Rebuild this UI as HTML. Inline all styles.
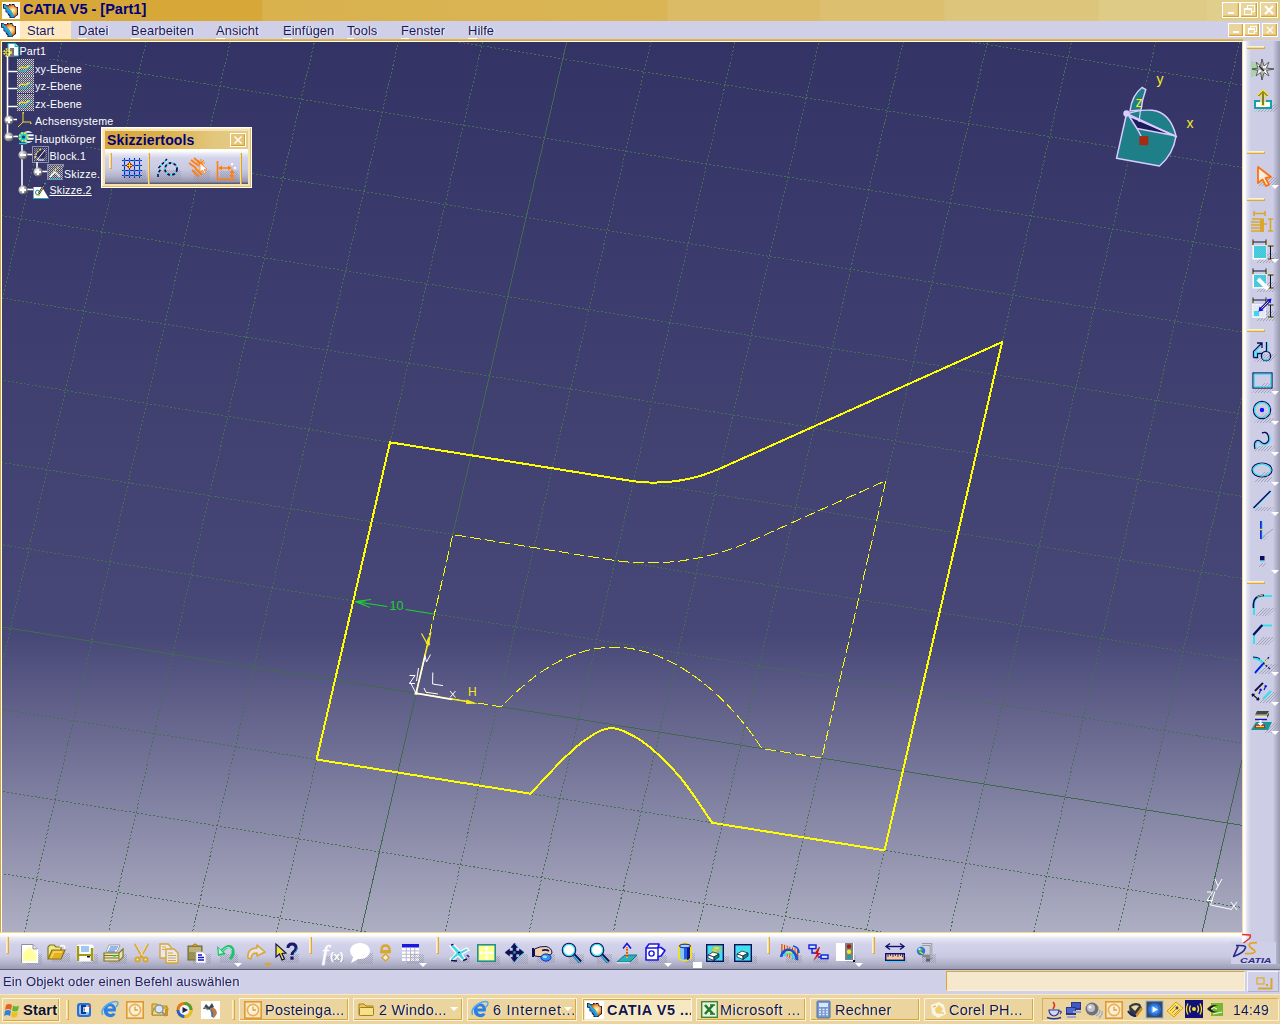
<!DOCTYPE html>
<html lang="de"><head><meta charset="utf-8"><title>CATIA V5 - [Part1]</title>
<style>
*{box-sizing:border-box}
html,body{margin:0;padding:0}
body{width:1280px;height:1024px;position:relative;overflow:hidden;background:#d0d0e8;font-family:"Liberation Sans",sans-serif;font-size:13px;color:#101050}
.abs{position:absolute}
#title{left:0;top:0;width:1280px;height:21px;background:linear-gradient(90deg,#d7a838 0,#d7a838 262px,#d9b24e 263px,#dab555 667px,#dcbb66 668px,#dcbb66 820px,#dcc070 821px,#dcc070 944px,#ddc57c 945px,#ddc57c 1098px,#decb86 1099px,#decb86 1206px,#e0ce8c 1207px,#e0ce8c 100%)}
#title .ticon{left:2px;top:2px;width:18px;height:17px;background:#fff}
#title .ttext{left:23px;top:0px;font-weight:bold;font-size:14.5px;line-height:18px;color:#00007c;white-space:nowrap}
.wbtn{position:absolute;background:#ead49a;border:1px solid #fff;box-shadow:inset -1px -1px 0 #d9a432,inset -2px -2px 0 #e6c67a}
.wbtn svg{position:absolute;left:0;top:0}
#menu{left:0;top:21px;width:1280px;height:18px;background:#cfcfe7}
#menu .micon{left:0;top:0;width:20px;height:18px;background:#fff}
#menu .mstart{left:20px;top:0;width:51px;height:18px;background:#ffe8c0}
.mi{position:absolute;top:2px;font-size:13px;line-height:16px;color:#18185c;white-space:nowrap;text-shadow:1px 0 0 #fff}
.mi u{text-decoration:none;border-bottom:1px solid #fff}
#goldline{left:0;top:39px;width:1280px;height:1px;background:#ecd08c}
#goldline2{left:0;top:39px;width:1243px;height:2px;background:linear-gradient(180deg,#e6b955,#d9a228)}
#whiteline{left:1px;top:41px;width:1241px;height:1px;background:#fff}
#leftgold{left:0;top:41px;width:1px;height:892px;background:#d9a228}
#leftwhite{left:1px;top:41px;width:1px;height:892px;background:#fff}
#viewport{left:2px;top:42px;width:1240px;height:890px;overflow:hidden;background:linear-gradient(180deg,#333366 0,#484878 594px,#aeaec3 100%)}
#viewport svg{position:absolute;left:0;top:0}
.tt{position:absolute;color:#fff;font-size:10.67px;letter-spacing:0.25px;line-height:12px;white-space:nowrap;background:#363667;padding:1px 2px 2px 1px;margin:-1px 0 0 -1px}
#rtb{left:1242px;top:41px;width:38px;height:923px;z-index:2;background:linear-gradient(90deg,#fff 0,#fff 3px,#e4e4f2 5px,#cdcde5 9px,#cdcde5 31px,#b4b4cc 34px,#9898b0 38px)}
#rgold{left:1242px;top:41px;width:1px;height:892px;background:#f0dca0;z-index:3}
#btb{left:0;top:932px;width:1280px;height:38px;background:linear-gradient(180deg,#f0d890 0,#f0d890 1px,#fff 1px,#fff 3px,#e8e8f5 6px,#d2d2ea 12px,#cacae2 24px,#b0b0c8 32px,#9a9ab2 37px,#5e5e74 37px,#5e5e74 38px)}
#status{left:0;top:970px;width:1280px;height:24px;background:#d0d0e8}
#status .stext{left:3px;top:4px;font-size:13px;line-height:16px;color:#20205c;white-space:nowrap;text-shadow:1px 0 0 #f4f4ff;letter-spacing:0.14px}
#taskbar{left:0;top:994px;width:1280px;height:30px;background:#ebd49d;border-top:1px solid #f6e8c4}
.tbtn{position:absolute;top:4px;height:23px;border:1px solid #fcf4de;box-shadow:inset -1px -1px 0 #d9a838;font-size:14.5px;letter-spacing:0.25px;line-height:20px;color:#141440;white-space:nowrap;overflow:hidden;text-shadow:1px 0 0 #fff}
.tbtn span{position:absolute;top:1px}
.hbar{position:absolute;width:18px;height:3px;border-top:1px solid #fbf0d0;border-bottom:1px solid #dca93a;border-right:1px solid #dca93a;background:#f2dca0}
.vbar{position:absolute;width:3px;border-left:1px solid #fbf0d0;border-right:1px solid #dca93a;border-bottom:1px solid #dca93a;background:#f2dca0}
.ic{position:absolute;width:24px;height:24px}
.ic svg{position:absolute;left:0;top:0;overflow:visible}
</style></head>
<body>
<div id="title" class="abs">
  <div class="ticon abs"><svg class="abs" style="left:1px;top:2px" width="16" height="15" viewBox="0 0 16 15"><defs><radialGradient id="cg12" cx="0.6" cy="0.45" r="0.55"><stop offset="0" stop-color="#fff8e0"/><stop offset="0.5" stop-color="#f8b850"/><stop offset="1" stop-color="#c05010"/></radialGradient></defs>
<path d="M0,0 L2,0 L3.5,1 L6,1 L6,0 L7.5,0 L8,1 L9,0 L11.5,0 L11.5,1.5 L12.5,2 L12.5,3 L15,3 L15,11 L14,11.5 L12,13 L11.5,14 L6.5,14 L6.5,12 L5,11 L4.5,9 L2.5,8 L2.5,5 L0,4.5 Z" fill="#1a0a30"/>
<path d="M3,1.5 L11,1 L11.5,3 L14.3,3.8 L14.2,10.5 L11,13 L10,11 Z" fill="url(#cg12)"/>
<path d="M0.6,0.6 L2,0.6 L8.5,7 L11,12 L10.8,13.5 L7.5,13.5 L7.2,11.5 L5.2,9.5 L3.2,7.5 L3,4.5 L0.8,4 Z" fill="#2090d8"/>
<path d="M1.5,1.5 L8,8 L10.3,12.5" stroke="#30b8c8" stroke-width="1.2" fill="none"/>
</svg></div>
  <div class="ttext abs">CATIA V5 - [Part1]</div>
  <div class="wbtn" style="left:1222px;top:2px;width:18px;height:16px"><svg width="16" height="14" viewBox="0 0 16 14"><rect x="5" y="9" width="6" height="2" fill="#fff"/></svg></div><div class="wbtn" style="left:1240px;top:2px;width:18px;height:16px"><svg width="16" height="14" viewBox="0 0 16 14"><rect x="6.5" y="2.5" width="7" height="6" fill="none" stroke="#fff" stroke-width="1"/><rect x="3.5" y="5.5" width="7" height="6" fill="#ead49a" stroke="#fff" stroke-width="1"/><rect x="3" y="5" width="8" height="2" fill="#fff"/></svg></div><div class="wbtn" style="left:1260px;top:2px;width:18px;height:16px"><svg width="16" height="14" viewBox="0 0 16 14"><path d="M4,3 L12,11 M12,3 L4,11" stroke="#fff" stroke-width="2" fill="none"/></svg></div>
</div>
<div id="menu" class="abs">
  <div class="micon abs"><svg class="abs" style="left:1px;top:2px" width="16" height="15" viewBox="0 0 16 15"><defs><radialGradient id="cg12" cx="0.6" cy="0.45" r="0.55"><stop offset="0" stop-color="#fff8e0"/><stop offset="0.5" stop-color="#f8b850"/><stop offset="1" stop-color="#c05010"/></radialGradient></defs>
<path d="M0,0 L2,0 L3.5,1 L6,1 L6,0 L7.5,0 L8,1 L9,0 L11.5,0 L11.5,1.5 L12.5,2 L12.5,3 L15,3 L15,11 L14,11.5 L12,13 L11.5,14 L6.5,14 L6.5,12 L5,11 L4.5,9 L2.5,8 L2.5,5 L0,4.5 Z" fill="#1a0a30"/>
<path d="M3,1.5 L11,1 L11.5,3 L14.3,3.8 L14.2,10.5 L11,13 L10,11 Z" fill="url(#cg12)"/>
<path d="M0.6,0.6 L2,0.6 L8.5,7 L11,12 L10.8,13.5 L7.5,13.5 L7.2,11.5 L5.2,9.5 L3.2,7.5 L3,4.5 L0.8,4 Z" fill="#2090d8"/>
<path d="M1.5,1.5 L8,8 L10.3,12.5" stroke="#30b8c8" stroke-width="1.2" fill="none"/>
</svg></div>
  <div class="mstart abs"></div>
  <div class="mi" style="left:27px"><u>S</u>tart</div><div class="mi" style="left:78px"><u>D</u>atei</div><div class="mi" style="left:131px"><u>B</u>earbeiten</div><div class="mi" style="left:216px"><u>A</u>nsicht</div><div class="mi" style="left:283px"><u>E</u>infügen</div><div class="mi" style="left:347px"><u>T</u>ools</div><div class="mi" style="left:401px"><u>F</u>enster</div><div class="mi" style="left:468px"><u>H</u>ilfe</div>
  <div class="wbtn" style="left:1228px;top:2px;width:16px;height:14px"><svg width="14" height="12" viewBox="0 0 14 12"><rect x="4" y="7" width="6" height="2" fill="#fff"/></svg></div><div class="wbtn" style="left:1244px;top:2px;width:16px;height:14px"><svg width="14" height="12" viewBox="0 0 14 12"><rect x="5.5" y="2.5" width="6" height="5" fill="none" stroke="#fff" stroke-width="1"/><rect x="3.5" y="4.5" width="6" height="5" fill="#ead49a" stroke="#fff" stroke-width="1"/><rect x="3" y="4" width="7" height="2" fill="#fff"/></svg></div><div class="wbtn" style="left:1262px;top:2px;width:16px;height:14px"><svg width="14" height="12" viewBox="0 0 14 12"><path d="M4,3 L10,9 M10,3 L4,9" stroke="#fff" stroke-width="1.2" fill="none"/></svg></div>
</div>
<div id="goldline" class="abs"></div><div id="goldline2" class="abs"></div>
<div id="leftgold" class="abs"></div><div id="leftwhite" class="abs"></div><div id="whiteline" class="abs"></div>
<div id="viewport" class="abs">
<svg width="1240" height="890" viewBox="0 0 1240 890">
<g shape-rendering="crispEdges" fill="none" stroke-width="1">
<line x1="-326.6" y1="943.9" x2="-33.2" y2="-324.9" stroke="#446f50" stroke-dasharray="2 2"/>
<line x1="-245.5" y1="956.8" x2="47.9" y2="-312.0" stroke="#446f50" stroke-dasharray="2 2"/>
<line x1="-164.4" y1="969.8" x2="129.1" y2="-299.0" stroke="#446f50" stroke-dasharray="2 2"/>
<line x1="-83.2" y1="982.8" x2="210.2" y2="-286.0" stroke="#446f50" stroke-dasharray="2 2"/>
<line x1="-2.1" y1="995.8" x2="291.3" y2="-273.0" stroke="#446f50" stroke-dasharray="2 2"/>
<line x1="79.0" y1="1008.8" x2="372.5" y2="-260.0" stroke="#446f50" stroke-dasharray="2 2"/>
<line x1="160.1" y1="1021.7" x2="453.6" y2="-247.1" stroke="#446f50" stroke-dasharray="2 2"/>
<line x1="241.3" y1="1034.7" x2="534.7" y2="-234.1" stroke="#446f50" stroke-dasharray="2 2"/>
<line x1="322.4" y1="1047.7" x2="615.8" y2="-221.1" stroke="#3f6a50"/>
<line x1="403.5" y1="1060.7" x2="697.0" y2="-208.1" stroke="#446f50" stroke-dasharray="2 2"/>
<line x1="484.7" y1="1073.7" x2="778.1" y2="-195.1" stroke="#446f50" stroke-dasharray="2 2"/>
<line x1="565.8" y1="1086.6" x2="859.2" y2="-182.2" stroke="#446f50" stroke-dasharray="2 2"/>
<line x1="646.9" y1="1099.6" x2="940.4" y2="-169.2" stroke="#446f50" stroke-dasharray="2 2"/>
<line x1="728.0" y1="1112.6" x2="1021.5" y2="-156.2" stroke="#446f50" stroke-dasharray="2 2"/>
<line x1="809.2" y1="1125.6" x2="1102.6" y2="-143.2" stroke="#446f50" stroke-dasharray="2 2"/>
<line x1="890.3" y1="1138.6" x2="1183.8" y2="-130.2" stroke="#446f50" stroke-dasharray="2 2"/>
<line x1="971.4" y1="1151.5" x2="1264.9" y2="-117.3" stroke="#446f50" stroke-dasharray="2 2"/>
<line x1="1052.6" y1="1164.5" x2="1346.0" y2="-104.3" stroke="#446f50" stroke-dasharray="2 2"/>
<line x1="1133.7" y1="1177.5" x2="1427.1" y2="-91.3" stroke="#3f6a50"/>
<line x1="1214.8" y1="1190.5" x2="1508.3" y2="-78.3" stroke="#446f50" stroke-dasharray="2 2"/>
<line x1="1296.0" y1="1203.5" x2="1589.4" y2="-65.3" stroke="#446f50" stroke-dasharray="2 2"/>
<line x1="-326.6" y1="943.9" x2="1377.1" y2="1216.4" stroke="#446f50" stroke-dasharray="2 2"/>
<line x1="-308.3" y1="864.6" x2="1395.4" y2="1137.1" stroke="#446f50" stroke-dasharray="2 2"/>
<line x1="-290.0" y1="785.3" x2="1413.8" y2="1057.8" stroke="#446f50" stroke-dasharray="2 2"/>
<line x1="-271.6" y1="706.0" x2="1432.1" y2="978.5" stroke="#446f50" stroke-dasharray="2 2"/>
<line x1="-253.3" y1="626.7" x2="1450.5" y2="899.2" stroke="#446f50" stroke-dasharray="2 2"/>
<line x1="-234.9" y1="547.4" x2="1468.8" y2="819.9" stroke="#3f6a50"/>
<line x1="-216.6" y1="468.1" x2="1487.1" y2="740.6" stroke="#446f50" stroke-dasharray="2 2"/>
<line x1="-198.3" y1="388.8" x2="1505.5" y2="661.3" stroke="#446f50" stroke-dasharray="2 2"/>
<line x1="-179.9" y1="309.5" x2="1523.8" y2="582.0" stroke="#446f50" stroke-dasharray="2 2"/>
<line x1="-161.6" y1="230.2" x2="1542.1" y2="502.7" stroke="#446f50" stroke-dasharray="2 2"/>
<line x1="-143.2" y1="150.9" x2="1560.5" y2="423.4" stroke="#446f50" stroke-dasharray="2 2"/>
<line x1="-124.9" y1="71.6" x2="1578.8" y2="344.1" stroke="#446f50" stroke-dasharray="2 2"/>
<line x1="-106.6" y1="-7.7" x2="1597.2" y2="264.8" stroke="#446f50" stroke-dasharray="2 2"/>
<line x1="-88.2" y1="-87.0" x2="1615.5" y2="185.5" stroke="#446f50" stroke-dasharray="2 2"/>
<line x1="-69.9" y1="-166.3" x2="1633.8" y2="106.2" stroke="#446f50" stroke-dasharray="2 2"/>
<line x1="-51.5" y1="-245.6" x2="1652.2" y2="26.9" stroke="#3f6a50"/>
</g>
<path d="M314.6,717.5 L388.0,400.3 L627.3,438.6 L627.3,438.6 L631.3,439.2 L635.2,439.7 L639.2,440.0 L643.2,440.3 L647.3,440.5 L651.3,440.6 L655.3,440.5 L659.4,440.4 L663.4,440.2 L667.4,439.8 L671.5,439.4 L675.5,438.8 L679.5,438.2 L683.5,437.4 L687.5,436.6 L691.5,435.6 L695.4,434.6 L699.4,433.5 L703.3,432.2 L707.1,430.9 L711.0,429.4 L714.8,427.9 L718.6,426.3 L1000.1,300.1 L882.5,808.4 L710.2,780.8 L708.0,777.5 L705.0,773.1 L701.5,767.8 L697.6,762.0 L693.4,755.9 L689.3,750.0 L685.2,744.4 L681.5,739.5 L678.0,735.2 L674.4,731.1 L670.9,727.2 L667.4,723.5 L663.9,719.9 L660.5,716.5 L657.2,713.4 L653.9,710.4 L650.7,707.6 L647.6,705.0 L644.6,702.6 L641.6,700.4 L638.6,698.3 L635.7,696.4 L632.8,694.7 L629.9,693.1 L627.0,691.7 L624.2,690.3 L621.4,689.0 L618.6,688.0 L615.9,687.1 L613.1,686.5 L610.4,686.2 L607.6,686.3 L604.8,686.7 L602.0,687.4 L599.2,688.4 L596.5,689.7 L593.7,691.2 L590.9,692.9 L588.0,694.7 L585.2,696.6 L582.3,698.6 L579.5,700.7 L576.6,703.0 L573.8,705.4 L570.8,708.0 L567.8,710.9 L564.5,713.9 L561.1,717.2 L557.2,721.1 L552.8,725.7 L548.0,730.7 L543.3,735.8 L538.7,740.7 L534.5,745.2 L531.0,749.0 L528.4,751.7 L314.6,717.5 Z" fill="none" stroke="#ffff00" stroke-width="2" stroke-linejoin="miter" shape-rendering="crispEdges"/>
<path d="M414.1,651.2 L450.8,492.6 L609.0,517.9 L609.0,517.9 L615.1,518.8 L621.2,519.5 L627.3,520.1 L633.5,520.5 L639.7,520.8 L645.9,520.9 L652.1,520.9 L658.3,520.7 L664.6,520.3 L670.8,519.8 L677.0,519.1 L683.2,518.2 L689.4,517.3 L695.6,516.1 L701.7,514.8 L707.8,513.3 L713.9,511.7 L720.0,510.0 L726.0,508.1 L731.9,506.0 L737.9,503.8 L743.7,501.4 L749.5,498.9 L883.9,438.6 L819.8,716.1 L759.9,706.5 L754.7,698.8 L749.5,691.5 L744.2,684.5 L738.8,677.9 L733.3,671.5 L727.8,665.4 L722.2,659.7 L716.6,654.2 L710.8,648.9 L705.0,644.0 L699.2,639.3 L693.3,634.9 L687.3,630.8 L681.3,626.9 L675.2,623.3 L669.0,620.0 L662.8,617.0 L656.5,614.3 L650.1,611.9 L643.6,609.9 L637.1,608.2 L630.5,606.8 L623.8,605.9 L617.0,605.3 L610.1,605.2 L603.1,605.5 L596.0,606.3 L588.7,607.6 L581.4,609.5 L573.9,611.9 L566.3,614.9 L558.5,618.5 L550.6,622.8 L542.5,627.8 L534.2,633.5 L525.8,640.1 L517.2,647.4 L508.3,655.7 L499.3,664.8 L414.1,651.2 Z" fill="none" stroke="#fafa10" stroke-width="1" stroke-dasharray="11 4" shape-rendering="crispEdges"/>
<path d="M354.0,559.8 L385.0,564.5" fill="none" stroke="#1fd034" stroke-width="1"/>
<path d="M404.0,567.5 L432.5,572.2" fill="none" stroke="#1fd034" stroke-width="1"/>
<path d="M369.0,557.5 L353.5,559.5 L368.0,565.5" fill="none" stroke="#1fd034" stroke-width="1"/>
<path d="M364.0,558.8 L354.0,559.7 L363.0,563.5" fill="none" stroke="#1fd034" stroke-width="1"/>
<text x="387.5" y="567.5" fill="#1fd034" font-family="Liberation Sans, sans-serif" font-size="12.5">10</text>
<path d="M414.1,651.2 L426.8,597.0" fill="none" stroke="#f4e820" stroke-width="1.6"/>
<path d="M414.1,651.2 L468.0,660.0" fill="none" stroke="#f4e820" stroke-width="1.6"/>
<path d="M419.5,591.5 L426.0,603.0 L429.0,590.0" fill="none" stroke="#f4e820" stroke-width="1.2"/>
<path d="M426.6,594 L423.8,601.5 L428.2,603.5 Z" fill="#f4e820"/>
<path d="M476,661.8 L464.5,657.5 L464,662 Z" fill="#f4e820"/>
<text x="466" y="654" fill="#f4e820" font-family="Liberation Sans, sans-serif" font-size="12">H</text>
<path d="M414.1,651.2 L423.0,614.0" fill="none" stroke="#fff" stroke-width="1.4"/>
<path d="M414.1,651.2 L450.0,657.5" fill="none" stroke="#fff" stroke-width="1.4"/>
<path d="M430.8,630.5 L430.6,642.0 L441.0,643.6" fill="none" stroke="#fff" stroke-width="1"/>
<path d="M422.0,646.0 L424.0,650.3 L436.0,652.0" fill="none" stroke="#fff" stroke-width="1"/>
<path d="M414.0,651.0 L408.0,640.0" fill="none" stroke="#fff" stroke-width="1"/>
<path d="M407.5,633.5 L413.0,633.5 L407.5,641.5 L413.0,641.5" fill="none" stroke="#fff" stroke-width="1"/>
<path d="M416.5,626.0 L414.5,639.0" fill="none" stroke="#fff" stroke-width="1"/>
<path d="M422.5,612.5 L424.5,620.0 L428.5,612.5" fill="none" stroke="#fff" stroke-width="1"/>
<path d="M448.0,649.0 L453.5,655.5" fill="none" stroke="#fff" stroke-width="1"/>
<path d="M453.5,649.0 L448.0,655.5" fill="none" stroke="#fff" stroke-width="1"/>
<rect x="412.6" y="649.7" width="3" height="3" fill="#fff"/>
<path d="M1212.8,849.5 L1208.5,863.0 L1229.0,867.3" fill="none" stroke="#fff" stroke-width="1"/>
<path d="M1205.0,850.0 L1210.5,850.0 L1205.0,858.5 L1210.5,858.5" fill="none" stroke="#fff" stroke-width="1"/>
<path d="M1213.0,837.0 L1216.0,844.0 L1220.0,837.0" fill="none" stroke="#fff" stroke-width="1"/>
<path d="M1216.0,844.0 L1214.0,848.0" fill="none" stroke="#fff" stroke-width="1"/>
<path d="M1229.0,860.0 L1235.0,868.0" fill="none" stroke="#fff" stroke-width="1"/>
<path d="M1235.0,860.0 L1229.0,868.0" fill="none" stroke="#fff" stroke-width="1"/>
<path d="M1128,69 Q1130.0,53.0 1140,45.5 L1143.8,47.5 Q1140.0,58.0 1139,68 Z" fill="#1f7f88" stroke="#dccbff" stroke-width="1.5"/>
<path d="M1124.5,72 L1114.5,116.30000000000001 L1157.5,124 Q1171.5,112.0 1174,94 Q1168.0,70.0 1150,68.3 Q1138.0,67.3 1124.5,72 Z" fill="#1f7f88" stroke="#dccbff" stroke-width="1.5" stroke-linejoin="round"/>
<path d="M1127.0,74.0 L1172.0,93.5 L1135.0,86.5 Z" fill="#1b1b5a" stroke="#dccbff" stroke-width="1.5" stroke-linejoin="round"/>
<path d="M1124.5,71.5 L1175.0,95.0" fill="none" stroke="#dccbff" stroke-width="1.5"/>
<path d="M1135.0,86.5 L1139.0,94.0" fill="none" stroke="#dccbff" stroke-width="1.5"/>
<path d="M1138.5,68.0 L1137.0,80.0" fill="none" stroke="#dccbff" stroke-width="1.2"/>
<circle cx="1124.5" cy="71.5" r="3.2" fill="#dccbff"/>
<rect x="1137.3" y="94.2" width="9" height="9" fill="#a42a10"/>
<text x="1154.5" y="41.5" fill="#f8ec20" font-family="Liberation Sans, sans-serif" font-size="14">y</text>
<text x="1133.5" y="64.5" fill="#f8ec20" font-family="Liberation Sans, sans-serif" font-size="14">z</text>
<text x="1184.5" y="86" fill="#f8ec20" font-family="Liberation Sans, sans-serif" font-size="14">x</text>
</svg>
<svg width="0" height="0" style="position:absolute"><defs>
<pattern id="hid" width="2" height="2" patternUnits="userSpaceOnUse"><rect width="2" height="2" fill="#4a4a70"/><rect width="1" height="1" fill="#d8d8d0"/><rect x="1" y="1" width="1" height="1" fill="#a8a8b0"/></pattern>
<pattern id="shd" width="2" height="2" patternUnits="userSpaceOnUse"><rect width="1" height="1" fill="#8c8ca0"/><rect x="1" y="1" width="1" height="1" fill="#8c8ca0"/></pattern>
<pattern id="hat" width="3" height="3" patternUnits="userSpaceOnUse"><path d="M-0.5,3.5 L3.5,-0.5 M-0.5,0.5 L0.5,-0.5 M2.5,3.5 L3.5,2.5" stroke="#9a9aae" stroke-width="0.9"/></pattern>
<radialGradient id="ball" cx="0.35" cy="0.35" r="0.7"><stop offset="0" stop-color="#f4f4f4"/><stop offset="0.6" stop-color="#a0a0a0"/><stop offset="1" stop-color="#585860"/></radialGradient>
</defs></svg><svg class="abs" style="left:-2px;top:-42px" width="130" height="200" viewBox="0 0 130 200"><path d="M7.5,56 V136 M8,71.5 H17 M8,88.5 H17 M8,106.5 H17 M8,119.5 H17 M8,136.5 H18 M22,145 V189 M22,154.5 H32 M22,189.5 H33 M37,162 V171 M37,171.5 H47" stroke="#fff" stroke-width="1.6" fill="none"/></svg><svg class="abs" style="left:1px;top:1px;overflow:visible" width="16" height="16" viewBox="0 0 16 16" ><path d="M5,0.5 H12 L15.5,3.5 V13 H5 Z" fill="#fff" stroke="#20b0b8" stroke-width="1"/><path d="M12,0.5 V3.5 H15.5" fill="#a0f0f0" stroke="#20b0b8" stroke-width="1"/><rect x="7" y="5" width="4" height="9" fill="#707078"/><circle cx="4.5" cy="9.5" r="3.2" fill="none" stroke="#f0e050" stroke-width="2.4" stroke-dasharray="1.6 1"/><circle cx="4.5" cy="9.5" r="2" fill="#f0e050"/><circle cx="4.5" cy="9.5" r="1" fill="#404048"/></svg><div class="tt" style="left:17.5px;top:3px">Part1</div><svg class="abs" style="left:15px;top:17px;overflow:visible" width="17" height="17" viewBox="0 0 17 17" ><rect width="17" height="17" fill="url(#hid)"/><path d="M2,10 L5,8 L8,9 L11,7 L14,8" stroke="#f0e040" stroke-width="1.5" fill="none"/><path d="M2,12 L8,12 L14,7" stroke="#30b0c0" stroke-width="1.5" fill="none"/></svg><div class="tt" style="left:33px;top:21px">xy-Ebene</div><svg class="abs" style="left:15px;top:34px;overflow:visible" width="17" height="17" viewBox="0 0 17 17" ><rect width="17" height="17" fill="url(#hid)"/><path d="M2,10 L5,8 L8,9 L11,7 L14,8" stroke="#f0e040" stroke-width="1.5" fill="none"/><path d="M2,12 L8,12 L14,7" stroke="#30b0c0" stroke-width="1.5" fill="none"/></svg><div class="tt" style="left:33px;top:38px">yz-Ebene</div><svg class="abs" style="left:15px;top:51.5px;overflow:visible" width="17" height="17" viewBox="0 0 17 17" ><rect width="17" height="17" fill="url(#hid)"/><path d="M2,10 L5,8 L8,9 L11,7 L14,8" stroke="#f0e040" stroke-width="1.5" fill="none"/><path d="M2,12 L8,12 L14,7" stroke="#30b0c0" stroke-width="1.5" fill="none"/></svg><div class="tt" style="left:33px;top:55.5px">zx-Ebene</div><svg class="abs" style="left:1.5px;top:72.5px;overflow:visible" width="10" height="10" viewBox="0 0 10 10" ><circle cx="5" cy="5" r="4.6" fill="url(#ball)"/><rect x="2" y="4" width="6" height="2" fill="#fff"/><rect x="4" y="2" width="2" height="6" fill="#fff"/></svg><svg class="abs" style="left:1.5px;top:89.5px;overflow:visible" width="10" height="10" viewBox="0 0 10 10" ><circle cx="5" cy="5" r="4.6" fill="url(#ball)"/><rect x="2" y="4" width="6" height="2" fill="#fff"/></svg><svg class="abs" style="left:15.5px;top:107.5px;overflow:visible" width="10" height="10" viewBox="0 0 10 10" ><circle cx="5" cy="5" r="4.6" fill="url(#ball)"/><rect x="2" y="4" width="6" height="2" fill="#fff"/></svg><svg class="abs" style="left:30.5px;top:124.5px;overflow:visible" width="10" height="10" viewBox="0 0 10 10" ><circle cx="5" cy="5" r="4.6" fill="url(#ball)"/><rect x="2" y="4" width="6" height="2" fill="#fff"/><rect x="4" y="2" width="2" height="6" fill="#fff"/></svg><svg class="abs" style="left:15.5px;top:142.5px;overflow:visible" width="10" height="10" viewBox="0 0 10 10" ><circle cx="5" cy="5" r="4.6" fill="url(#ball)"/><rect x="2" y="4" width="6" height="2" fill="#fff"/><rect x="4" y="2" width="2" height="6" fill="#fff"/></svg><svg class="abs" style="left:15px;top:70px;overflow:visible" width="16" height="16" viewBox="0 0 16 16" ><path d="M6,1 V10 L1,15 M6,10 H14" stroke="#f0d838" stroke-width="1" fill="none"/><rect x="5.5" y="0" width="1.5" height="1.5" fill="#f0d838"/><rect x="13" y="10.5" width="1.5" height="1.5" fill="#f0d838"/></svg><div class="tt" style="left:33px;top:73px">Achsensysteme</div><svg class="abs" style="left:16px;top:87px;overflow:visible" width="16" height="16" viewBox="0 0 16 16" ><circle cx="10" cy="8" r="6" fill="#fff"/><path d="M8,4.5 H15 M7,8 H16 M8,11.5 H15" stroke="#283068" stroke-width="1.4"/><circle cx="5.5" cy="8" r="5" fill="#20c8d8"/><circle cx="5.5" cy="8" r="4" fill="none" stroke="#f0e838" stroke-width="2" stroke-dasharray="1.6 1.6"/><circle cx="5.5" cy="8" r="1.6" fill="#283068"/><path d="M1,14.5 H9" stroke="#20c8d8" stroke-width="1.4"/></svg><div class="tt" style="left:32.5px;top:90.5px">Hauptkörper</div><svg class="abs" style="left:30px;top:104px;overflow:visible" width="17" height="17" viewBox="0 0 17 17" ><rect x="0.5" y="0.5" width="16" height="16" fill="none" stroke="#e8e8e8" stroke-width="1" stroke-dasharray="1 1"/><rect x="2" y="2" width="13" height="13" fill="url(#hid)" opacity="0.55"/><circle cx="9" cy="8" r="4.5" fill="#2a2a5c"/><path d="M3,12 Q4,5 10,3" stroke="#f0e040" stroke-width="1.4" fill="none" stroke-dasharray="2 1"/><path d="M5,14 L13,4 M6,14 H12" stroke="#fff" stroke-width="1" fill="none"/></svg><div class="tt" style="left:47.5px;top:108px">Block.1</div><svg class="abs" style="left:45px;top:122px;overflow:visible" width="17" height="16" viewBox="0 0 17 16" ><rect x="0.5" y="0.5" width="16" height="15" fill="none" stroke="#e8e8e8" stroke-width="1" stroke-dasharray="1 1"/><rect x="1" y="1" width="15" height="14" fill="url(#hid)" opacity="0.9"/><path d="M4,11 L8,6 L12,3" stroke="#f0e040" stroke-width="1.2" fill="none" stroke-dasharray="2 1"/><path d="M3,13 L8,8 L13,13" stroke="#fff" stroke-width="1.4" fill="none"/><path d="M3,15 H13" stroke="#20b0c0" stroke-width="1"/></svg><div class="tt" style="left:62px;top:125.5px">Skizze.</div><svg class="abs" style="left:31px;top:142px;overflow:visible" width="16" height="15" viewBox="0 0 16 15" ><path d="M0.5,14 V3 H9 L15.5,14 Z" fill="#fff"/><path d="M0,14.5 H16" stroke="#20a8b8" stroke-width="1"/><path d="M2.5,9 C2.5,5.5 6.5,5.5 6.5,8.5 C6.5,11.5 3.5,11.5 2.5,9" stroke="#20a0b0" stroke-width="1.1" fill="none"/><path d="M3,11 Q5,12.5 7,11.5" stroke="#e8d820" stroke-width="1" fill="none"/><path d="M6,9.5 L11.5,0.5" stroke="#101040" stroke-width="2"/><path d="M6.4,9 L11,1.5" stroke="#f0d020" stroke-width="0.9"/><path d="M11.5,0.5 L12.5,-1" stroke="#20b0c0" stroke-width="1.4"/></svg><div class="tt" style="left:47.5px;top:141.5px;text-decoration:underline">Skizze.2</div>
<div class="abs" style="left:99px;top:85px;width:151px;height:61px;background:#f6e4b0;border:1px solid #fff;box-shadow:inset -1px -1px 0 #e4bc60,inset 1px 1px 0 #fbf0d0"></div><div class="abs" style="left:103px;top:89px;width:143px;height:18px;background:linear-gradient(90deg,#d9a636 0,#dcb04a 40%,#e2c67c 75%,#e4cc88 100%)"></div><div class="abs" style="left:105px;top:90px;font-weight:bold;font-size:14px;line-height:17px;color:#00007c;white-space:nowrap;letter-spacing:0.15px">Skizziertools</div><div class="abs" style="left:228px;top:91px;width:16px;height:14px;background:#e6c674;border:1px solid #fff;box-shadow:inset -1px -1px 0 #d8a030"><svg class="abs" style="left:0;top:0" width="14" height="12" viewBox="0 0 14 12"><path d="M3.5,2.5 L10.5,9.5 M10.5,2.5 L3.5,9.5" stroke="#fff" stroke-width="1.4"/></svg></div><div class="abs" style="left:103px;top:107px;width:143px;height:35px;background:linear-gradient(180deg,#fff 0,#fff 2px,#e8e8f4 5px,#d2d2ea 9px,#cacae2 20px,#b4b4cc 27px,#9494ac 33px,#5c5c74 34px,#5c5c74 35px)"></div><div class="vbar" style="left:107px;top:111px;height:16px"></div><div class="abs" style="left:146px;top:111px;width:2px;height:31px;background:#d9a228;border-left:1px solid #f2dca0"></div><div class="abs" style="left:238px;top:111px;width:2px;height:31px;background:#d9a228;border-left:1px solid #f2dca0"></div><div class="abs" style="left:241px;top:142px;width:5px;height:0px"></div><svg class="abs" style="left:120px;top:116px;overflow:visible" width="24" height="24" viewBox="0 0 24 24" ><rect x="3" y="12" width="21" height="11" fill="url(#shd)" opacity="0.55"/><path d="M2.5,0 V20 M0,2.5 H20" stroke="#1010ff" stroke-width="1"/><path d="M7.5,0 V20 M0,7.5 H20" stroke="#1010ff" stroke-width="1"/><path d="M12.5,0 V20 M0,12.5 H20" stroke="#1010ff" stroke-width="1"/><path d="M17.5,0 V20 M0,17.5 H20" stroke="#1010ff" stroke-width="1"/><rect x="1.5" y="1.5" width="2" height="2" fill="#10a090"/><rect x="1.5" y="6.5" width="2" height="2" fill="#10a090"/><rect x="1.5" y="11.5" width="2" height="2" fill="#10a090"/><rect x="1.5" y="16.5" width="2" height="2" fill="#10a090"/><rect x="6.5" y="1.5" width="2" height="2" fill="#10a090"/><rect x="6.5" y="6.5" width="2" height="2" fill="#10a090"/><rect x="6.5" y="11.5" width="2" height="2" fill="#10a090"/><rect x="6.5" y="16.5" width="2" height="2" fill="#10a090"/><rect x="11.5" y="1.5" width="2" height="2" fill="#10a090"/><rect x="11.5" y="6.5" width="2" height="2" fill="#10a090"/><rect x="11.5" y="11.5" width="2" height="2" fill="#10a090"/><rect x="11.5" y="16.5" width="2" height="2" fill="#10a090"/><rect x="16.5" y="1.5" width="2" height="2" fill="#10a090"/><rect x="16.5" y="6.5" width="2" height="2" fill="#10a090"/><rect x="16.5" y="11.5" width="2" height="2" fill="#10a090"/><rect x="16.5" y="16.5" width="2" height="2" fill="#10a090"/><path d="M7.5,4 L11,7.5 L7.5,11 L4,7.5 Z" fill="#b01808"/><path d="M7.5,5 V10 M5,7.5 H10" stroke="#ffe800" stroke-width="1.2"/></svg><svg class="abs" style="left:155px;top:116px;overflow:visible" width="24" height="24" viewBox="0 0 24 24" ><rect x="2" y="12" width="22" height="10" fill="url(#shd)" opacity="0.5"/><path d="M1,19 V15 L4,11 M1.5,10 L10,1" stroke="#10104a" stroke-width="1.6" stroke-dasharray="3 2" fill="none"/><path d="M1,19 V15 L4,11 M1.5,10 L10,1" stroke="#40e0f0" stroke-width="1.6" stroke-dasharray="2 3" stroke-dashoffset="-3" fill="none"/><circle cx="14" cy="11" r="6" fill="none" stroke="#10104a" stroke-width="1.8" stroke-dasharray="3 2"/><circle cx="14" cy="11" r="6" fill="none" stroke="#40e0f0" stroke-width="1.8" stroke-dasharray="2 3" stroke-dashoffset="-3"/></svg><svg class="abs" style="left:186px;top:116px;overflow:visible" width="24" height="24" viewBox="0 0 24 24" ><rect x="6" y="12" width="16" height="11" fill="url(#shd)" opacity="0.5"/><path d="M1,5 L8,10 M3,2 L11,8 M6,0 L13,6 M4,12 L11,19 M7,10 L14,17" stroke="#ff8010" stroke-width="1.8"/><path d="M13,1 V9 M9,5 H17 M10,2 L16,8 M16,2 L10,8" stroke="#ff8010" stroke-width="1"/><path d="M12,5 L12,14 L14.5,12 L16.5,16 L18,15 L16,11.5 L19,11 Z" fill="#fff" stroke="#ff8010" stroke-width="0.8"/></svg><svg class="abs" style="left:214px;top:118px;overflow:visible" width="24" height="24" viewBox="0 0 24 24" ><rect x="4" y="11" width="18" height="10" fill="url(#shd)" opacity="0.5"/><path d="M1.5,1 V19.5 H19" stroke="#ff8010" stroke-width="1.6" fill="none"/><path d="M3,8 H15 M16,10 V18" stroke="#ff8010" stroke-width="1.4"/><path d="M2,8 L6,5.5 V10.5 Z M16,8 L12,5.5 V10.5 Z M16,9 L13.5,13 H18.5 Z M16,19 L13.5,15 H18.5 Z" fill="#ff8010"/><rect x="15" y="3" width="2" height="2" fill="#fff"/><rect x="18" y="7" width="2" height="2" fill="#fff"/></svg>
</div>
<div id="rgold" class="abs"></div>
<div id="rtb" class="abs"><div class="hbar" style="left:5px;top:5px"></div><svg class="abs" style="left:8px;top:17px;overflow:visible" width="28" height="24" viewBox="0 0 28 24"><path d="M1,2 L1,20 L12,11 Z" fill="#a8d4a8"/><path d="M12,1 L14,8 L19,4 L16.5,10 L24,11 L16.5,12.5 L19,18 L14,14.5 L12,22 L10.5,14.5 L6,18 L8,12.5 L2,11 L8,10 L6,4 L10.5,8 Z" fill="#f4f4f4" stroke="#606060" stroke-width="1"/><path d="M12,1 V22 M2,11 H24" stroke="#505050" stroke-width="0.8"/><path d="M9,8 L14,13" stroke="#202020" stroke-width="1.4"/></svg><svg class="abs" style="left:10px;top:47px;overflow:visible" width="24" height="26" viewBox="0 0 24 26"><path d="M3,24 L11,16 H31 L23,24 Z" fill="url(#hat)" opacity="0.9"/><path d="M3,12 V20 H19 V12" fill="none" stroke="#18a0a8" stroke-width="2"/><path d="M3,13 H8 M14,13 H19" stroke="#18a0a8" stroke-width="2"/><rect x="4" y="14" width="14" height="5" fill="#fff"/><path d="M11,18 V4" stroke="#101050" stroke-width="1.6"/><path d="M11,18 V5" stroke="#ffe800" stroke-width="3"/><path d="M11,17 V4" stroke="#101050" stroke-width="1"/><path d="M6,8 L11,3 L16,8" fill="none" stroke="#ffe800" stroke-width="2.4"/><path d="M6.5,8 L11,3.5 L15.5,8" fill="none" stroke="#101050" stroke-width="0.8"/></svg><div class="hbar" style="left:5px;top:110px"></div><svg class="abs" style="left:12px;top:123px;overflow:visible" width="24" height="26" viewBox="0 0 24 26"><path d="M3,22 L12,13 H30 L21,22 Z" fill="url(#hat)" opacity="0.9"/><path d="M4,3 L4,19 L8.5,15.5 L12,22 L15,20.5 L11.5,14 L17,13 Z" fill="#f6f0e0" stroke="#ff7010" stroke-width="1.8" stroke-linejoin="round"/></svg><svg class="abs" style="left:29px;top:144px;overflow:visible" width="8" height="4" viewBox="0 0 8 4"><path d="M0,0 H8 L4,4 Z" fill="#fff"/></svg><div class="hbar" style="left:5px;top:157px"></div><svg class="abs" style="left:8px;top:169px;overflow:visible" width="24" height="24" viewBox="0 0 24 24"><path d="M4,1 V6 M15,1 V6 M4,3.5 H15 M2,9 H13 V21 M1,12 H10 M1,15 H10 M1,18 H10 M1,21 H10 M18,9 H23 M18,21 H23 M20.5,9 V21 M13,14 H17" stroke="#d9a62e" stroke-width="1.6" fill="none"/><rect x="10" y="9" width="4" height="13" fill="#d9a62e"/></svg><svg class="abs" style="left:9px;top:198px;overflow:visible" width="26" height="24" viewBox="0 0 26 24"><path d="M4,24 L14,14 H34 L24,24 Z" fill="url(#hat)" opacity="0.9"/><rect x="1.5" y="6.5" width="14" height="14" fill="#fff"/><rect x="3" y="7" width="12" height="12" fill="#38d8e8"/><rect x="3" y="7" width="12" height="12" fill="url(#shd)" opacity="0.35"/><path d="M2,1 V6 M15,1 V6" stroke="#f4ec80" stroke-width="2.4"/><path d="M2,0.5 V6 M15,0.5 V6 M2,3 H15" stroke="#101040" stroke-width="1"/><path d="M17,7 H22 M17,20 H22" stroke="#f4ec80" stroke-width="2.4"/><path d="M17,7 H22.5 M17,20 H22.5 M19.5,7 V20" stroke="#101040" stroke-width="1"/></svg><svg class="abs" style="left:29px;top:218px;overflow:visible" width="8" height="4" viewBox="0 0 8 4"><path d="M0,0 H8 L4,4 Z" fill="#fff"/></svg><svg class="abs" style="left:9px;top:227px;overflow:visible" width="26" height="24" viewBox="0 0 26 24"><path d="M4,24 L14,14 H34 L24,24 Z" fill="url(#hat)" opacity="0.9"/><rect x="1.5" y="6.5" width="14" height="14" fill="#fff"/><rect x="3" y="7" width="12" height="12" fill="#38d8e8"/><rect x="3" y="7" width="12" height="12" fill="url(#shd)" opacity="0.35"/><path d="M2,1 V6 M15,1 V6" stroke="#f4ec80" stroke-width="2.4"/><path d="M2,0.5 V6 M15,0.5 V6 M2,3 H15" stroke="#101040" stroke-width="1"/><path d="M17,7 H22 M17,20 H22" stroke="#f4ec80" stroke-width="2.4"/><path d="M17,7 H22.5 M17,20 H22.5 M19.5,7 V20" stroke="#101040" stroke-width="1"/><path d="M7,11 L17,21" stroke="#fff" stroke-width="4"/></svg><svg class="abs" style="left:9px;top:256px;overflow:visible" width="26" height="24" viewBox="0 0 26 24"><path d="M4,24 L14,14 H34 L24,24 Z" fill="url(#hat)" opacity="0.9"/><rect x="1.5" y="7.5" width="13" height="13" fill="#e8e8f4" stroke="#fff" stroke-dasharray="2 1"/><rect x="3" y="14" width="5" height="5" fill="#38d8e8"/><path d="M2,1 V6 M15,1 V6" stroke="#f4ec80" stroke-width="2.4"/><path d="M2,0.5 V6 M15,0.5 V6 M2,3 H15" stroke="#101040" stroke-width="1"/><path d="M17,8 H22 M17,20 H22" stroke="#f4ec80" stroke-width="2.4"/><path d="M17,8 H22.5 M17,20 H22.5 M19.5,8 V20" stroke="#101040" stroke-width="1"/><path d="M9,13 L19,3" stroke="#1010e0" stroke-width="3"/><path d="M9,13 L19,3" stroke="#f0e020" stroke-width="1"/><path d="M7.5,14.5 L8.5,9.5 L12.5,13.5 Z M20.5,1.5 L15.5,2.5 L19.5,6.5 Z" fill="#1010e0"/></svg><div class="hbar" style="left:5px;top:288px"></div><svg class="abs" style="left:10px;top:299px;overflow:visible" width="24" height="26" viewBox="0 0 24 26"><path d="M2,22 L10,14 H26 L18,22 Z" fill="url(#hat)" opacity="0.9"/><path d="M1.5,17.5 V11.5 L9.5,3.5 M5,3 H10 V8 M1.5,17.5 H5.5 V13.5 H10.5 M14.5,2 V12" fill="none" stroke="#0c0c5c" stroke-width="1.3"/><circle cx="14" cy="16" r="4.6" fill="none" stroke="#0c0c5c" stroke-width="1.3"/><path d="M2.7,16.3 V12 L9,5.6 M2.7,16.3 H4.3 V12.3 H10 M15.7,3 V11.6" fill="none" stroke="#38e0f0" stroke-width="1.1"/><path d="M10.6,17.4 A3.5 3.5 0 0 0 17.4,17.4" fill="none" stroke="#38e0f0" stroke-width="1.1"/></svg><svg class="abs" style="left:9px;top:329px;overflow:visible" width="26" height="26" viewBox="0 0 26 26"><path d="M1,23 L6,18 H26 L21,23 Z" fill="url(#hat)" opacity="0.9"/><rect x="2" y="3" width="19" height="15" fill="none" stroke="#0c0c5c" stroke-width="1.2"/><rect x="3.2" y="4.2" width="16.6" height="12.6" fill="none" stroke="#38e0f0" stroke-width="1.2"/><path d="M7,18 L12,13 H22 L17,18 Z" fill="url(#hat)" opacity="0.8"/></svg><svg class="abs" style="left:29px;top:350px;overflow:visible" width="8" height="4" viewBox="0 0 8 4"><path d="M0,0 H8 L4,4 Z" fill="#fff"/></svg><svg class="abs" style="left:9px;top:358px;overflow:visible" width="26" height="26" viewBox="0 0 26 26"><path d="M3,24 L8,19 H24 L19,24 Z" fill="url(#hat)" opacity="0.9"/><circle cx="11" cy="11" r="8.6" fill="none" stroke="#0c0c5c" stroke-width="1.2"/><circle cx="11" cy="11" r="7.4" fill="none" stroke="#38e0f0" stroke-width="1.2"/><circle cx="11" cy="11" r="2.2" fill="#1010ff"/><path d="M8,19 L13,14 H22 L17,19 Z" fill="url(#hat)" opacity="0.8"/></svg><svg class="abs" style="left:29px;top:380px;overflow:visible" width="8" height="4" viewBox="0 0 8 4"><path d="M0,0 H8 L4,4 Z" fill="#fff"/></svg><svg class="abs" style="left:10px;top:389px;overflow:visible" width="24" height="24" viewBox="0 0 24 24"><path d="M2,21 L7,16 H23 L18,21 Z" fill="url(#hat)" opacity="0.9"/><path d="M3,19 C1,10 6,9 9,12 C13,16 19,12 16,5 C15,2 12,2 10,3" fill="none" stroke="#0c0c5c" stroke-width="1.4"/><path d="M4.2,18.5 C2.6,11.4 6,10.4 8.4,13 C13,17.6 20.4,13 17.2,4.8" fill="none" stroke="#38e0f0" stroke-width="1.1"/></svg><svg class="abs" style="left:29px;top:411px;overflow:visible" width="8" height="4" viewBox="0 0 8 4"><path d="M0,0 H8 L4,4 Z" fill="#fff"/></svg><svg class="abs" style="left:8px;top:419px;overflow:visible" width="26" height="24" viewBox="0 0 26 24"><path d="M3,22 L8,17 H24 L19,22 Z" fill="url(#hat)" opacity="0.9"/><ellipse cx="12" cy="10" rx="10" ry="7" fill="none" stroke="#0c0c5c" stroke-width="1.2"/><ellipse cx="12" cy="10" rx="8.8" ry="5.8" fill="none" stroke="#38e0f0" stroke-width="1.2"/><path d="M9,16 L13,12 H22 L18,16 Z" fill="url(#hat)" opacity="0.8"/></svg><svg class="abs" style="left:29px;top:441px;overflow:visible" width="8" height="4" viewBox="0 0 8 4"><path d="M0,0 H8 L4,4 Z" fill="#fff"/></svg><svg class="abs" style="left:9px;top:447px;overflow:visible" width="26" height="26" viewBox="0 0 26 26"><path d="M3,23 L7,19 H23 L19,23 Z" fill="url(#hat)" opacity="0.9"/><path d="M2.5,20 L19.5,3" stroke="#0c0c5c" stroke-width="1.6"/><path d="M3.6,20.4 L20.2,3.8" stroke="#38e0f0" stroke-width="0.9"/></svg><svg class="abs" style="left:29px;top:471px;overflow:visible" width="8" height="4" viewBox="0 0 8 4"><path d="M0,0 H8 L4,4 Z" fill="#fff"/></svg><svg class="abs" style="left:10px;top:478px;overflow:visible" width="24" height="24" viewBox="0 0 24 24"><path d="M9,19 L21,10" stroke="#a0a0b0" stroke-width="1"/><path d="M7,21 L11,17 H16 L12,21 Z" fill="url(#hat)" opacity="0.9"/><path d="M9,2 V20" stroke="#1010e0" stroke-width="1.8"/><path d="M10.2,2 V20" stroke="#38e0f0" stroke-width="0.8"/><path d="M7.5,10.5 H11" stroke="#f0e020" stroke-width="1.4"/></svg><svg class="abs" style="left:10px;top:509px;overflow:visible" width="24" height="24" viewBox="0 0 24 24"><path d="M6,17 L10,13 H15 L11,17 Z" fill="url(#hat)" opacity="0.9"/><rect x="8" y="6" width="4.5" height="4.5" fill="#0c0c5c"/><path d="M8,11 H12.5" stroke="#38e0f0" stroke-width="1"/></svg><svg class="abs" style="left:29px;top:529px;overflow:visible" width="8" height="4" viewBox="0 0 8 4"><path d="M0,0 H8 L4,4 Z" fill="#fff"/></svg><div class="hbar" style="left:5px;top:540px"></div><svg class="abs" style="left:9px;top:553px;overflow:visible" width="26" height="26" viewBox="0 0 26 26"><path d="M3,22 L11,14 H25 L17,22 Z" fill="url(#hat)" opacity="0.9"/><path d="M3,21 V10 A8 8 0 0 1 11,2 H21" fill="none" stroke="#38e0f0" stroke-width="2"/><path d="M2.4,14 V10 A8.6 8.6 0 0 1 11,1.4 H13" fill="none" stroke="#0c0c5c" stroke-width="1.6"/><path d="M6,3 Q9,1 12,1.2" fill="none" stroke="#f0e060" stroke-width="0.8"/></svg><svg class="abs" style="left:9px;top:582px;overflow:visible" width="26" height="26" viewBox="0 0 26 26"><path d="M3,22 L11,14 H25 L17,22 Z" fill="url(#hat)" opacity="0.9"/><path d="M3,21 V11 L11,2.5 H21" fill="none" stroke="#38e0f0" stroke-width="2"/><path d="M2.3,12 L11.3,2" fill="none" stroke="#0c0c5c" stroke-width="2.2"/></svg><svg class="abs" style="left:9px;top:611px;overflow:visible" width="26" height="26" viewBox="0 0 26 26"><path d="M6,22 L16,12 H30 L20,22 Z" fill="url(#hat)" opacity="0.9"/><path d="M2,6 Q8,6 12,11" fill="none" stroke="#38e0f0" stroke-width="2.6"/><path d="M2,5 Q7,5 9,7" fill="none" stroke="#0c0c5c" stroke-width="1"/><path d="M4,21 L12,12" stroke="#1010e0" stroke-width="2"/><path d="M5.2,21.4 L13,12.5" stroke="#38e0f0" stroke-width="0.9"/><path d="M12,12 L19,4 M12,11 L19,17" stroke="#0c0c5c" stroke-width="1.2" stroke-dasharray="2 1.5"/><path d="M14,10 L16,8" stroke="#f0e020" stroke-width="1.2"/></svg><svg class="abs" style="left:29px;top:631px;overflow:visible" width="8" height="4" viewBox="0 0 8 4"><path d="M0,0 H8 L4,4 Z" fill="#fff"/></svg><svg class="abs" style="left:8px;top:639px;overflow:visible" width="28" height="26" viewBox="0 0 28 26"><path d="M8,23 L19,12 H33 L22,23 Z" fill="url(#hat)" opacity="0.9"/><path d="M5,11 L13,3" stroke="#0c0c5c" stroke-width="2.2"/><path d="M5.8,12 L13.8,4" stroke="#f0e060" stroke-width="1"/><path d="M13,19 L21,11" stroke="#38e0f0" stroke-width="2.4"/><path d="M9,14 L11,9 M11,9 L9.5,9.8 M11,9 L11.4,10.8 M14,10 L16,5.5 M16,5.5 L14.4,6.2 M16,5.5 L16.5,7.2" stroke="#1010e0" stroke-width="1.2"/><path d="M2,14 L9,20 M2,14 L2.6,16.6 M2,14 L4.6,14.4 M9,20 L6.4,19.6 M9,20 L8.4,17.4" stroke="#101030" stroke-width="1.1"/></svg><svg class="abs" style="left:29px;top:661px;overflow:visible" width="8" height="4" viewBox="0 0 8 4"><path d="M0,0 H8 L4,4 Z" fill="#fff"/></svg><svg class="abs" style="left:8px;top:668px;overflow:visible" width="28" height="26" viewBox="0 0 28 26"><path d="M14,24 L24,14 H34 L24,24 Z" fill="url(#hat)" opacity="0.9"/><path d="M1,21 L6,13 H22 L18,21 Z" fill="#189898"/><path d="M5,17.5 H15" stroke="#d01818" stroke-width="3.4"/><path d="M6,17.5 H14" stroke="#f0e020" stroke-width="1.4"/><path d="M5,6 L7,2 H19 V6 L17,9 H5 Z" fill="#404848"/><path d="M5,6 H17 L19,2.5" fill="none" stroke="#e0e0e0" stroke-width="0.8"/><rect x="5" y="6.5" width="12" height="2.5" fill="#f0e0b0"/><path d="M5,10.5 H17" stroke="#1010e0" stroke-width="1.4"/><path d="M10.5,11 V15" stroke="#fff" stroke-width="2"/><path d="M7.5,14 H13.5 L10.5,17 Z" fill="#fff"/></svg><svg class="abs" style="left:29px;top:690px;overflow:visible" width="8" height="4" viewBox="0 0 8 4"><path d="M0,0 H8 L4,4 Z" fill="#fff"/></svg></div>
<div id="btb" class="abs"><div class="vbar" style="left:6px;top:5px;height:17px"></div><svg class="abs" style="left:21px;top:12px;overflow:visible" width="22" height="22" viewBox="0 0 22 22"><rect x="5" y="10" width="16" height="11" fill="url(#shd)" opacity="0.55"/><path d="M0.5,0.5 H12 L16.5,5 V18.5 H0.5 Z" fill="#fff" stroke="#909098" stroke-width="1"/><path d="M12,0.5 V5 H16.5" fill="#e8e8e8" stroke="#909098" stroke-width="1"/><path d="M2,17 V9 L8,3 L15,9 V17 Z" fill="#ffff80" opacity="0.75"/><path d="M16.5,5 V18.5 H1" fill="none" stroke="#fff" stroke-width="1.2"/></svg><svg class="abs" style="left:47px;top:12px;overflow:visible" width="24" height="20" viewBox="0 0 24 20"><rect x="5" y="9" width="18" height="9" fill="url(#shd)" opacity="0.55"/><path d="M1,14 V3 L3,1 H7 L9,3 H14 V6" fill="#f0e890" stroke="#807818" stroke-width="1.2"/><path d="M1,15 L5,6 H18 L14,15 Z" fill="#e8b020" stroke="#807818" stroke-width="1.2"/><path d="M4,14 L7,8 H15" fill="none" stroke="#f8d860" stroke-width="1.5"/><path d="M13,3 Q16,0 18,3 L17,5" fill="none" stroke="#fff" stroke-width="1.4"/></svg><svg class="abs" style="left:76px;top:12px;overflow:visible" width="22" height="22" viewBox="0 0 22 22"><rect x="6" y="10" width="16" height="10" fill="url(#shd)" opacity="0.55"/><rect x="0.5" y="0.5" width="17" height="17" rx="2" fill="#fff"/><path d="M2,2 V17 M16,4 V17" stroke="#a09818" stroke-width="2.4"/><path d="M2,11 H16" stroke="#a09818" stroke-width="2"/><path d="M5,3 H13 M5,5 H13 M5,7 H13" stroke="#4090e0" stroke-width="1"/><rect x="11" y="12" width="3" height="1.5" fill="#101040"/></svg><svg class="abs" style="left:103px;top:12px;overflow:visible" width="24" height="22" viewBox="0 0 24 22"><rect x="6" y="10" width="18" height="10" fill="url(#shd)" opacity="0.55"/><path d="M6,1 H17 L14,8 H3 Z" fill="#fff" stroke="#909098" stroke-width="0.8"/><path d="M7,3 H15 M6,5 H14 M5,7 H12" stroke="#3070e0" stroke-width="1.2"/><path d="M1,9 H16 L20,5 V13 L16,17 H1 Z" fill="#e8e4c0" stroke="#807818" stroke-width="1.2"/><path d="M1,11.5 H16 M1,14 H16 M16,9 V17" stroke="#807818" stroke-width="1"/><rect x="10" y="11" width="3" height="1.6" fill="#20c040"/></svg><svg class="abs" style="left:133px;top:11px;overflow:visible" width="20" height="22" viewBox="0 0 20 22"><path d="M2,1 L10,15 M15,1 L7,15" stroke="#d9a62e" stroke-width="2.2"/><path d="M3,1 L10,13 M14,1 L8,12" stroke="#f8ecc0" stroke-width="0.8"/><circle cx="4.5" cy="16.5" r="3" fill="#d9a62e"/><circle cx="12.5" cy="16.5" r="3" fill="#d9a62e"/><circle cx="4.5" cy="16.5" r="1" fill="#f8ecc0"/><circle cx="12.5" cy="16.5" r="1" fill="#f8ecc0"/></svg><svg class="abs" style="left:159px;top:11px;overflow:visible" width="22" height="22" viewBox="0 0 22 22"><path d="M1,1 H9 L12,4 V15 H1 Z" fill="#e8e8f4" stroke="#d9a62e" stroke-width="1.4"/><path d="M7,6 H15 L19,10 V20 H7 Z" fill="#e8e8f4" stroke="#d9a62e" stroke-width="1.4"/><path d="M9,10 H14 M9,12.5 H17 M9,15 H17 M9,17.5 H17 M3,4 H7 M3,6.5 H6" stroke="#d9a62e" stroke-width="1.1"/></svg><svg class="abs" style="left:187px;top:11px;overflow:visible" width="24" height="22" viewBox="0 0 24 22"><rect x="6" y="11" width="18" height="10" fill="url(#shd)" opacity="0.55"/><rect x="1" y="3" width="14" height="14" fill="#9a9058" stroke="#706820" stroke-width="1"/><rect x="2" y="4" width="12" height="5" fill="#c8c090" opacity="0.7"/><path d="M5,3 Q8,-1 11,3 Z" fill="#f0c040" stroke="#a07810" stroke-width="1"/><path d="M9,9 H16 L19,12 V20 H9 Z" fill="#fff" stroke="#c0c0c8" stroke-width="0.8"/><path d="M11,12 H15 M11,14.5 H17 M11,17 H17" stroke="#1010e0" stroke-width="1.5"/></svg><svg class="abs" style="left:216px;top:12px;overflow:visible" width="22" height="22" viewBox="0 0 22 22"><rect x="4" y="10" width="18" height="9" fill="url(#shd)" opacity="0.55"/><path d="M5,8 Q14,-2 17,6 Q18,11 14,15" fill="none" stroke="#20c070" stroke-width="3"/><path d="M6,7 Q13,0 16,6" fill="none" stroke="#a0f0c0" stroke-width="1"/><path d="M1,2 L2,12 L10,10 Z" fill="#20c070"/><path d="M2.5,4 L3,10 L7,9 Z" fill="#c0f8d8"/></svg><svg class="abs" style="left:234px;top:31px;overflow:visible" width="8" height="4" viewBox="0 0 8 4"><path d="M0,0 H8 L4,4 Z" fill="#fff"/></svg><svg class="abs" style="left:246px;top:12px;overflow:visible" width="22" height="22" viewBox="0 0 22 22"><path d="M11,4 V1 L19,8 L11,12 V9 Q5,9 5,15 L2,14 Q1,4 11,4 Z" fill="#e4e0ec" stroke="#d9a62e" stroke-width="1.5" stroke-linejoin="round"/></svg><svg class="abs" style="left:264px;top:31px;overflow:visible" width="8" height="4" viewBox="0 0 8 4"><path d="M0,0 H8 L4,4 Z" fill="#d9a62e"/></svg><svg class="abs" style="left:275px;top:11px;overflow:visible" width="26" height="22" viewBox="0 0 26 22"><rect x="6" y="11" width="18" height="9" fill="url(#shd)" opacity="0.55"/><path d="M1,1 L1,14 L4.5,11 L7,17 L9.5,16 L7,10.5 L11,10 Z" fill="#f0e040" stroke="#101050" stroke-width="1.2"/><path d="M13,5 Q13,1 17,1 Q21,1 21,5 Q21,7.5 18.5,9 Q17,10 17,12" fill="none" stroke="#18186c" stroke-width="3"/><rect x="15.4" y="13.5" width="3.2" height="3.2" fill="#18186c"/><path d="M19,10 Q22,8 22.5,5" fill="none" stroke="#20b0b8" stroke-width="1"/></svg><div class="vbar" style="left:309px;top:5px;height:17px"></div><svg class="abs" style="left:322px;top:11px;overflow:visible" width="26" height="22" viewBox="0 0 26 22"><rect x="2" y="13" width="20" height="6" fill="url(#shd)" opacity="0.55"/><text x="0" y="17" font-family="Liberation Serif, serif" font-style="italic" font-size="22" fill="#fff" stroke="#fff" stroke-width="0.6">f</text><text x="8" y="17" font-family="Liberation Sans, sans-serif" font-size="11" font-weight="bold" fill="#fff">(x)</text></svg><svg class="abs" style="left:349px;top:10px;overflow:visible" width="24" height="24" viewBox="0 0 24 24"><rect x="8" y="11" width="16" height="11" fill="url(#shd)" opacity="0.55"/><ellipse cx="11" cy="9" rx="10" ry="8" fill="#fff"/><path d="M5,13 L2,21 L11,16 Z" fill="#fff"/></svg><svg class="abs" style="left:379px;top:12px;overflow:visible" width="14" height="20" viewBox="0 0 14 20"><path d="M2.5,9 V5.5 Q2.5,1.5 6.5,1.5 Q10.5,1.5 10.5,5.5 V9" fill="none" stroke="#d9a62e" stroke-width="2.4"/><rect x="1.5" y="6" width="10" height="3.4" fill="#d9a62e"/><path d="M6.5,10 L10,13.5 L6.5,17 L3,13.5 Z" fill="#f8f0d8" stroke="#d9a62e" stroke-width="1.4"/></svg><svg class="abs" style="left:402px;top:12px;overflow:visible" width="22" height="22" viewBox="0 0 22 22"><rect x="5" y="10" width="17" height="10" fill="url(#shd)" opacity="0.55"/><rect x="0" y="0" width="17" height="17" fill="#fff"/><rect x="0" y="0" width="17" height="3.5" fill="#1818e0"/><path d="M4.25,4 V17 M0,6.9 H17" stroke="#b8b8d0" stroke-width="1"/><path d="M8.50,4 V17 M0,10.3 H17" stroke="#b8b8d0" stroke-width="1"/><path d="M12.75,4 V17 M0,13.7 H17" stroke="#b8b8d0" stroke-width="1"/><rect x="8" y="10" width="9" height="7" fill="url(#shd)" opacity="0.5"/></svg><svg class="abs" style="left:419px;top:31px;overflow:visible" width="8" height="4" viewBox="0 0 8 4"><path d="M0,0 H8 L4,4 Z" fill="#fff"/></svg><div class="vbar" style="left:436px;top:5px;height:17px"></div><svg class="abs" style="left:448px;top:11px;overflow:visible" width="24" height="22" viewBox="0 0 24 22"><rect x="3" y="12" width="19" height="8" fill="url(#shd)" opacity="0.55"/><path d="M2,3 L6,2 L12,8 L19,5 L21,7 L14,11 L17,16 L14,17 L10,13 L4,18 L2,16 L8,10 Z" fill="#40d8e8" stroke="#fff" stroke-width="1.2"/><path d="M3,2 L5.5,1.5 M3,17.5 L9,18 M15,17.5 L19,16" stroke="#101050" stroke-width="1.4"/><path d="M10,10 L12,9" stroke="#101050" stroke-width="1"/><path d="M19,12 L21,14" stroke="#1030d0" stroke-width="1.6"/></svg><svg class="abs" style="left:477px;top:12px;overflow:visible" width="24" height="22" viewBox="0 0 24 22"><rect x="4" y="12" width="19" height="9" fill="url(#shd)" opacity="0.55"/><rect x="0.8" y="0.8" width="17.4" height="16.4" fill="#ffff8c" stroke="#209090" stroke-width="1.6"/><path d="M9.5,3 V15 M3,9 H16" stroke="#fff" stroke-width="1.4"/><path d="M9.5,2 L7,5 H12 Z M9.5,16 L7,13 H12 Z M2,9 L5,6.5 V11.5 Z M17,9 L14,6.5 V11.5 Z" fill="#fff"/></svg><svg class="abs" style="left:504px;top:10px;overflow:visible" width="24" height="24" viewBox="0 0 24 24"><rect x="8" y="12" width="16" height="10" fill="url(#shd)" opacity="0.55"/><path d="M10.5,1 L14,5.5 H12 V9 H15.5 V7 L20,10.5 L15.5,14 V12 H12 V15.5 H14 L10.5,20 L7,15.5 H9 V12 H5.5 V14 L1,10.5 L5.5,7 V9 H9 V5.5 H7 Z" fill="#101058" stroke="#101058" stroke-width="0.6"/><path d="M11,1.5 L14.5,6 M15.5,14.5 L20,11 M11,20 L14.5,15.5" stroke="#38e0f0" stroke-width="1"/><circle cx="10.5" cy="10.5" r="1.4" fill="#2090a0"/></svg><svg class="abs" style="left:532px;top:13px;overflow:visible" width="24" height="20" viewBox="0 0 24 20"><rect x="5" y="9" width="18" height="9" fill="url(#shd)" opacity="0.55"/><path d="M1,3 V12" stroke="#101058" stroke-width="2"/><path d="M2.5,4 Q8,1 14,1.5 Q20,3 20,8 Q19,11 15,10 L11,12 L2.5,11 Z" fill="#f4d0a8" stroke="#101058" stroke-width="1"/><path d="M10,5.5 Q14,4 17,6" fill="none" stroke="#101058" stroke-width="1.6"/><ellipse cx="14" cy="12.5" rx="5" ry="3.6" fill="#3090f0" stroke="#1030c0" stroke-width="1"/><ellipse cx="12.8" cy="11.8" rx="2.4" ry="1.4" fill="#90e0f8"/></svg><svg class="abs" style="left:561px;top:10px;overflow:visible" width="24" height="24" viewBox="0 0 24 24"><rect x="8" y="12" width="15" height="10" fill="url(#shd)" opacity="0.55"/><path d="M12.5,12.5 L19.5,20" stroke="#101058" stroke-width="3.6"/><path d="M12,13 L19,20.5" stroke="#38d0e8" stroke-width="1.2"/><circle cx="8" cy="8" r="6.6" fill="#fff" stroke="#101058" stroke-width="1.4"/><circle cx="8" cy="8" r="5.6" fill="none" stroke="#38e0f0" stroke-width="1.2"/></svg><svg class="abs" style="left:589px;top:10px;overflow:visible" width="24" height="24" viewBox="0 0 24 24"><rect x="8" y="12" width="15" height="10" fill="url(#shd)" opacity="0.55"/><path d="M12.5,12.5 L19.5,20" stroke="#101058" stroke-width="3.6"/><path d="M12,13 L19,20.5" stroke="#38d0e8" stroke-width="1.2"/><circle cx="8" cy="8" r="6.6" fill="#fff" stroke="#101058" stroke-width="1.4"/><circle cx="8" cy="8" r="5.6" fill="none" stroke="#38e0f0" stroke-width="1.2"/></svg><svg class="abs" style="left:616px;top:10px;overflow:visible" width="24" height="24" viewBox="0 0 24 24"><rect x="6" y="14" width="16" height="8" fill="url(#shd)" opacity="0.55"/><path d="M1,20 L9,13 H21 L14,20 Z" fill="#28b0c0" stroke="#107888" stroke-width="1"/><path d="M1,20.8 H14" stroke="#fff" stroke-width="1"/><path d="M11,16 V5" stroke="#e02020" stroke-width="1.6"/><path d="M11,16 V5" stroke="#f0e020" stroke-width="1.6" stroke-dasharray="1.5 1.5"/><path d="M7,6.5 L11,1.5 L15,6.5" fill="none" stroke="#1010e0" stroke-width="1.5"/></svg><svg class="abs" style="left:645px;top:11px;overflow:visible" width="24" height="22" viewBox="0 0 24 22"><rect x="3" y="12" width="19" height="8" fill="url(#shd)" opacity="0.55"/><path d="M1,5 L4,1 H14 L13,4.5 H16 L20,7.5 L16,13 L13,13.5 V17 H1 Z" fill="#fff" stroke="#1818e0" stroke-width="1.6" stroke-linejoin="round"/><path d="M1,5 H13 V13.5 M13,5 L14,1.5" fill="none" stroke="#1818e0" stroke-width="1.4"/><circle cx="6.5" cy="10.5" r="2.6" fill="none" stroke="#1818e0" stroke-width="1.4"/></svg><svg class="abs" style="left:664px;top:31px;overflow:visible" width="8" height="4" viewBox="0 0 8 4"><path d="M0,0 H8 L4,4 Z" fill="#fff"/></svg><svg class="abs" style="left:677px;top:10px;overflow:visible" width="18" height="22" viewBox="0 0 18 22"><rect x="8" y="11" width="10" height="10" fill="url(#shd)" opacity="0.55"/><path d="M2,4 V16 Q8,21 14,16 V4 Q8,-1 2,4 Z" fill="#2060e8" stroke="#f0e020" stroke-width="2"/><path d="M3,5 V16 Q5,18 7,18 V6 Z" fill="#80c8f8"/><path d="M10,6 V18 Q12,18 13,16 V5 Z" fill="#101890"/><ellipse cx="8" cy="4" rx="5.6" ry="1.8" fill="#a8d8f8" stroke="#1818a0" stroke-width="1"/></svg><div class="abs" style="left:693px;top:30px;width:9px;height:6px;background:#fff"></div><svg class="abs" style="left:706px;top:12px;overflow:visible" width="24" height="22" viewBox="0 0 24 22"><rect x="5" y="12" width="18" height="8" fill="url(#shd)" opacity="0.55"/><rect x="0.7" y="0.7" width="16.6" height="16.6" fill="#40e0f0" stroke="#101058" stroke-width="1.4"/><path d="M6,4.5 L10,2 L15,3.5 L11,6.5 Z M6,4.5 V7 L11,9 V6.5 M11,9 L15,6 V3.5" fill="#f8f060" fill-opacity="0.6" stroke="#c0b020" stroke-width="0.8"/><path d="M2,11 L7,8 L13,10 L8,13 Z" fill="#fcfcd8" stroke="#101040" stroke-width="0.7"/><path d="M2,11 V14 L8,16.5 V13 Z" fill="#fff" stroke="#101040" stroke-width="0.7"/><path d="M8,13 L13,10 V13 L8,16.5 Z" fill="#108888" stroke="#101040" stroke-width="0.7"/></svg><svg class="abs" style="left:734px;top:12px;overflow:visible" width="24" height="22" viewBox="0 0 24 22"><rect x="5" y="12" width="18" height="8" fill="url(#shd)" opacity="0.55"/><rect x="0.7" y="0.7" width="16.6" height="16.6" fill="#40e0f0" stroke="#101058" stroke-width="1.4"/><path d="M3,10 L8,7 L14,9 L9,12 Z" fill="#fcfcd8" stroke="#101040" stroke-width="0.7"/><path d="M3,10 V13 L9,15.5 V12 Z" fill="#fff" stroke="#101040" stroke-width="0.7"/><path d="M9,12 L14,9 V12 L9,15.5 Z" fill="#108888" stroke="#101040" stroke-width="0.7"/></svg><div class="vbar" style="left:767px;top:5px;height:17px"></div><svg class="abs" style="left:780px;top:11px;overflow:visible" width="24" height="22" viewBox="0 0 24 22"><rect x="6" y="12" width="16" height="8" fill="url(#shd)" opacity="0.55"/><path d="M2.0,1.0 V12.0" stroke="#d04010" stroke-width="1.3"/><path d="M4.6,1.9 V12.9" stroke="#d04010" stroke-width="1.3"/><path d="M7.2,2.8 V13.8" stroke="#d04010" stroke-width="1.3"/><path d="M9.8,3.7 V14.7" stroke="#d04010" stroke-width="1.3"/><path d="M12.4,4.6 V15.6" stroke="#d04010" stroke-width="1.3"/><path d="M15.0,5.5 V16.5" stroke="#d04010" stroke-width="1.3"/><path d="M17.6,6.4 V17.4" stroke="#d04010" stroke-width="1.3"/><path d="M3.3,1.5 V12.5" stroke="#f8c890" stroke-width="1.3"/><path d="M5.9,2.4 V13.4" stroke="#f8c890" stroke-width="1.3"/><path d="M8.5,3.3 V14.3" stroke="#f8c890" stroke-width="1.3"/><path d="M11.1,4.2 V15.2" stroke="#f8c890" stroke-width="1.3"/><path d="M13.7,5.1 V16.1" stroke="#f8c890" stroke-width="1.3"/><path d="M16.3,6.0 V17.0" stroke="#f8c890" stroke-width="1.3"/><path d="M1,14 Q3,6 10,7 Q16,9 17,17" fill="none" stroke="#1050e0" stroke-width="2.6"/><path d="M4,13 Q6,9 10,10 Q13,11 14,16" fill="none" stroke="#40d8f0" stroke-width="2.4"/><path d="M6,9.5 Q9,8 12,10" fill="none" stroke="#f0e020" stroke-width="1.6"/><path d="M13,3 Q19,4 19,10" fill="none" stroke="#1050e0" stroke-width="1.6"/></svg><svg class="abs" style="left:808px;top:12px;overflow:visible" width="24" height="22" viewBox="0 0 24 22"><rect x="6" y="13" width="14" height="6" fill="url(#shd)" opacity="0.55"/><rect x="1" y="1" width="7" height="3.6" fill="#c0f0f8" stroke="#1818e0" stroke-width="1.4"/><rect x="13" y="11" width="7" height="3.6" fill="#c0f0f8" stroke="#1818e0" stroke-width="1.4"/><path d="M4,5 V9 H7 M13,13 H10" fill="none" stroke="#1818e0" stroke-width="1.4"/><path d="M11,3 L6,10 H9 L5,17 L13,9 H10 L12,3 Z" fill="#d01010"/></svg><svg class="abs" style="left:836px;top:11px;overflow:visible" width="22" height="22" viewBox="0 0 22 22"><rect x="10" y="12" width="10" height="8" fill="url(#shd)" opacity="0.55"/><rect x="0" y="0" width="18" height="18" fill="#fff"/><rect x="9" y="0" width="8" height="17" fill="#808088"/><circle cx="13" cy="3.5" r="2.2" fill="#a02010"/><circle cx="13" cy="8.7" r="2.2" fill="#f8e818"/><circle cx="13" cy="13.8" r="2.2" fill="#18a0a8"/><rect x="17" y="17" width="2" height="2" fill="#101010"/></svg><svg class="abs" style="left:855px;top:31px;overflow:visible" width="8" height="4" viewBox="0 0 8 4"><path d="M0,0 H8 L4,4 Z" fill="#fff"/></svg><div class="vbar" style="left:872px;top:5px;height:17px"></div><svg class="abs" style="left:885px;top:11px;overflow:visible" width="24" height="22" viewBox="0 0 24 22"><rect x="3" y="14" width="19" height="6" fill="url(#shd)" opacity="0.55"/><path d="M1,3.5 H19" stroke="#101070" stroke-width="1.4"/><path d="M5,0.5 L1,3.5 L5,6.5 M15,0.5 L19,3.5 L15,6.5" fill="none" stroke="#101070" stroke-width="1.4"/><rect x="0.7" y="10.7" width="18.6" height="6.6" fill="#f8c8a0" stroke="#101070" stroke-width="1.4"/><path d="M3,11 V14 M5.5,11 V13 M8,11 V14 M10.5,11 V13 M13,11 V14 M15.5,11 V13 M17.5,11 V14" stroke="#101070" stroke-width="0.8"/><path d="M1,18.5 H20" stroke="#38e0f0" stroke-width="1"/></svg><svg class="abs" style="left:914px;top:11px;overflow:visible" width="24" height="22" viewBox="0 0 24 22"><rect x="8" y="11" width="14" height="9" fill="url(#shd)" opacity="0.55"/><path d="M8,1.5 H17 V15 H12 M8,13 H17" fill="none" stroke="#888890" stroke-width="2.4"/><path d="M8,1.5 H17 V15" fill="none" stroke="#e8e8e8" stroke-width="0.8"/><rect x="12" y="16" width="4" height="2.5" fill="#606068"/><circle cx="7" cy="8" r="4.2" fill="#3070d8"/><path d="M4,7 Q6,4 9,6 Q8,9 5,10 Z" fill="#40c050"/><path d="M6,9 L9,11" stroke="#f0e020" stroke-width="1.4"/><circle cx="5.5" cy="6" r="1.2" fill="#c0e8f8"/></svg></div>
<div id="logo" class="abs" style="left:0;top:0;z-index:3"><div class="abs" style="left:1231px;top:942px;width:45px;height:22px;background:#cfcfe7"></div><svg class="abs" style="left:1230px;top:932px;overflow:visible" width="50" height="34" viewBox="0 0 50 34"><path d="M12,2.6 L20.3,3 Q20.8,5 19.5,6.5 L13.5,11" fill="none" stroke="#e03428" stroke-width="1.5" stroke-linejoin="round"/><path d="M6,13.6 Q16,13 15.5,15.5 Q14,21 3.6,24.4 L8.2,14.2" fill="none" stroke="#2c2c88" stroke-width="1.6" stroke-linejoin="round"/><path d="M27,10.6 L21,11 Q18,12.5 20,15 L24.5,18.5 Q26,20.5 22,21.4 L15,21.6" fill="none" stroke="#e8a020" stroke-width="1.7" stroke-linejoin="round"/><text x="10" y="30.6" font-family="Liberation Sans, sans-serif" font-weight="bold" font-style="italic" font-size="7.4" fill="#2c2c88" textLength="31.5" lengthAdjust="spacingAndGlyphs">CATIA</text></svg></div>
<div id="status" class="abs"><div class="stext abs">Ein Objekt oder einen Befehl auswählen</div><div class="abs" style="left:946px;top:1px;width:299px;height:20px;background:#f5e8cc;border:1px solid;border-color:#d9a830 #fbf2d8 #fbf2d8 #d9a830"></div><div class="abs" style="left:1247px;top:1px;width:32px;height:21px;background:#d0d0e8;border:1px solid;border-color:#f4f4ff #b0b0c8 #b0b0c8 #f4f4ff"><svg class="abs" style="left:8px;top:5px" width="18" height="13" viewBox="0 0 18 13"><rect x="1" y="1" width="7" height="6" fill="none" stroke="#e0b040" stroke-width="1.4"/><path d="M15.5,1 V11.5 H2" fill="none" stroke="#d9a62e" stroke-width="2"/><rect x="10" y="7" width="2" height="2" fill="#d9a62e"/></svg></div></div>
<div id="taskbar" class="abs"><div class="tbtn" style="left:2px;top:3px;width:58px;height:24px;font-weight:bold;font-size:15px;letter-spacing:0;color:#101020"><span style="left:20px;top:1px">Start</span></div><svg class="abs" style="left:5px;top:7px;overflow:visible" width="16" height="16" viewBox="0 0 16 16"><path d="M1,3 Q4,1 7,3 L6,8 Q3,6 0,8 Z" fill="#e86020"/><path d="M8,3.5 Q11,5.5 14,3.5 L13,8.5 Q10,10.5 7,8.5 Z" fill="#60b830"/><path d="M0,9 Q3,7 6,9 L5,14 Q2,12 -1,14 Z" fill="#3080e0"/><path d="M7,9.5 Q10,11.5 13,9.5 L12,14.5 Q9,16.5 6,14.5 Z" fill="#f0c020"/></svg><div class="vbar" style="left:66px;top:5px;height:20px"></div><svg class="abs" style="left:76px;top:6px;overflow:visible" width="18" height="18" viewBox="0 0 18 18"><rect x="1" y="2" width="14" height="14" rx="3" fill="#2870d8"/><rect x="3" y="4" width="10" height="10" rx="2" fill="#90c8f8"/><path d="M10,5 H6 V12 H10" fill="none" stroke="#103890" stroke-width="2"/><path d="M8,9 L15,5" stroke="#e85010" stroke-width="1.6"/><rect x="9" y="6" width="4" height="5" fill="#fff"/></svg><svg class="abs" style="left:101px;top:5px;overflow:visible" width="18" height="18" viewBox="0 0 18 18"><path d="M3,10 A6 6 0 1 1 14.5,11.5 H6.5 A3.2 3.2 0 0 0 12,13 L14.5,14 A6.2 6.2 0 0 1 3,10 Z" fill="#2880e8"/><path d="M6.3,8.6 H11.8 A2.8 2.8 0 0 0 6.3,8.6 Z" fill="#f0d8a0"/><path d="M1.5,15 Q-1,9 8,3.5 Q14,0.5 16.5,2 Q18,3.5 15,7" fill="none" stroke="#58a8f0" stroke-width="1.5"/></svg><svg class="abs" style="left:126px;top:6px;overflow:visible" width="18" height="18" viewBox="0 0 18 18"><rect x="0.8" y="0.8" width="16.4" height="16.4" fill="#f8e8c8" stroke="#e09830" stroke-width="1.6"/><circle cx="9" cy="9" r="5.6" fill="#fbf0d8" stroke="#e8b050" stroke-width="1.6"/><path d="M9,5.5 V9 H12" fill="none" stroke="#e0a040" stroke-width="1.3"/></svg><svg class="abs" style="left:151px;top:6px;overflow:visible" width="20" height="18" viewBox="0 0 20 18"><path d="M1,14 V3 H6 L8,5 H16 V14 Z" fill="#f0c850" stroke="#b08820" stroke-width="1"/><path d="M1,14 L3,7 H17 L16,14 Z" fill="#f8dc80" stroke="#b08820" stroke-width="1"/><circle cx="8" cy="8" r="4" fill="#d8e8f8" stroke="#8090a8" stroke-width="1.4"/><path d="M11,11 L15,15" stroke="#8090a8" stroke-width="2"/><rect x="14" y="8" width="3" height="7" fill="#d09020"/></svg><svg class="abs" style="left:176px;top:6px;overflow:visible" width="18" height="18" viewBox="0 0 18 18"><circle cx="8.5" cy="9" r="8" fill="#e07818"/><path d="M8.5,1 A8 8 0 0 1 16.5,9 L8.5,9 Z" fill="#50a030"/><path d="M8.5,17 A8 8 0 0 1 0.5,9 L8.5,9 Z" fill="#2860c8"/><path d="M8.5,17 A8 8 0 0 0 16.5,9 L8.5,9 Z" fill="#e8c020"/><circle cx="8.5" cy="9" r="5" fill="#f4f4f8"/><path d="M6.5,6 L12,9 L6.5,12 Z" fill="#202040"/></svg><svg class="abs" style="left:201px;top:6px;overflow:visible" width="20" height="18" viewBox="0 0 20 18"><rect x="0" y="0" width="19" height="18" fill="#fff"/><path d="M2,8 L5,3 L8,6 L11,2 L13,6 L9,9 L6,8 Z" fill="#404850"/><path d="M9,7 Q15,6 16,12 Q14,17 12,17 L10,12 Z" fill="#c07840"/><path d="M10,9 Q12,12 11,16" fill="none" stroke="#3080c0" stroke-width="1.6"/><path d="M3,6 L7,9" stroke="#909090" stroke-width="1.4"/></svg><div class="vbar" style="left:232px;top:5px;height:20px"></div><div class="tbtn" style="left:239px;top:3px;width:110px;height:23px;"><span style="left:25px">Posteinga...</span></div><svg class="abs" style="left:244px;top:6px;overflow:visible" width="18" height="18" viewBox="0 0 18 18"><rect x="0.8" y="0.8" width="16.4" height="16.4" fill="#f8e8c8" stroke="#e09830" stroke-width="1.6"/><circle cx="9" cy="9" r="5.6" fill="#fbf0d8" stroke="#e8b050" stroke-width="1.6"/><path d="M9,5.5 V9 H12" fill="none" stroke="#e0a040" stroke-width="1.3"/></svg><div class="tbtn" style="left:353px;top:3px;width:110px;height:23px;"><span style="left:25px">2 Windo...</span></div><svg class="abs" style="left:358px;top:7px;overflow:visible" width="18" height="16" viewBox="0 0 18 16"><path d="M1,13 V2 H6 L8,4 H15 V13 Z" fill="#f0c850" stroke="#a08020" stroke-width="1"/><rect x="1.5" y="5.5" width="14" height="8" rx="1" fill="#f8e088" stroke="#a08020" stroke-width="1"/></svg><svg class="abs" style="left:450px;top:12px;overflow:visible" width="8" height="4" viewBox="0 0 8 4"><path d="M0,0 H8 L4,4 Z" fill="#fff"/></svg><div class="tbtn" style="left:467px;top:3px;width:110px;height:23px;letter-spacing:0.75px;"><span style="left:25px">6 Internet...</span></div><svg class="abs" style="left:471px;top:5px;overflow:visible" width="18" height="18" viewBox="0 0 18 18"><path d="M3,10 A6 6 0 1 1 14.5,11.5 H6.5 A3.2 3.2 0 0 0 12,13 L14.5,14 A6.2 6.2 0 0 1 3,10 Z" fill="#2880e8"/><path d="M6.3,8.6 H11.8 A2.8 2.8 0 0 0 6.3,8.6 Z" fill="#f0d8a0"/><path d="M1.5,15 Q-1,9 8,3.5 Q14,0.5 16.5,2 Q18,3.5 15,7" fill="none" stroke="#58a8f0" stroke-width="1.5"/></svg><svg class="abs" style="left:564px;top:12px;overflow:visible" width="8" height="4" viewBox="0 0 8 4"><path d="M0,0 H8 L4,4 Z" fill="#fff"/></svg><div class="tbtn" style="left:582px;top:3px;width:110px;height:23px;background:#f6e8c2;box-shadow:inset 1px 1px 0 #d9a838;font-weight:bold;letter-spacing:0.5px;"><span style="left:24px">CATIA V5 ...</span></div><div class="abs" style="left:585px;top:6px;width:19px;height:18px;background:#fff"></div><svg class="abs" style="left:587px;top:8px" width="16" height="15" viewBox="0 0 16 15"><defs><radialGradient id="cg5878" cx="0.6" cy="0.45" r="0.55"><stop offset="0" stop-color="#fff8e0"/><stop offset="0.5" stop-color="#f8b850"/><stop offset="1" stop-color="#c05010"/></radialGradient></defs>
<path d="M0,0 L2,0 L3.5,1 L6,1 L6,0 L7.5,0 L8,1 L9,0 L11.5,0 L11.5,1.5 L12.5,2 L12.5,3 L15,3 L15,11 L14,11.5 L12,13 L11.5,14 L6.5,14 L6.5,12 L5,11 L4.5,9 L2.5,8 L2.5,5 L0,4.5 Z" fill="#1a0a30"/>
<path d="M3,1.5 L11,1 L11.5,3 L14.3,3.8 L14.2,10.5 L11,13 L10,11 Z" fill="url(#cg5878)"/>
<path d="M0.6,0.6 L2,0.6 L8.5,7 L11,12 L10.8,13.5 L7.5,13.5 L7.2,11.5 L5.2,9.5 L3.2,7.5 L3,4.5 L0.8,4 Z" fill="#2090d8"/>
<path d="M1.5,1.5 L8,8 L10.3,12.5" stroke="#30b8c8" stroke-width="1.2" fill="none"/>
</svg><div class="tbtn" style="left:696px;top:3px;width:110px;height:23px;letter-spacing:0.45px;"><span style="left:23px">Microsoft ...</span></div><svg class="abs" style="left:701px;top:6px;overflow:visible" width="18" height="18" viewBox="0 0 18 18"><rect x="0.7" y="0.7" width="15.6" height="15.6" fill="#e8f4e0" stroke="#408838" stroke-width="1.4"/><path d="M4,4 L12,13 M12,4 L4,13" stroke="#207828" stroke-width="2.6"/><path d="M9,4 H14 M9,13 H14" stroke="#207828" stroke-width="1.4"/></svg><div class="tbtn" style="left:810px;top:3px;width:110px;height:23px;"><span style="left:24px">Rechner</span></div><svg class="abs" style="left:816px;top:5px;overflow:visible" width="16" height="20" viewBox="0 0 16 20"><rect x="1" y="1" width="13" height="17" rx="1" fill="#7898d0" stroke="#5070a8" stroke-width="1"/><rect x="3" y="3" width="9" height="4" fill="#d8e8f8"/><path d="M3,9.5 H12 M3,12 H12 M3,14.5 H12" stroke="#e8eef8" stroke-width="1.4" stroke-dasharray="2 1.5"/></svg><div class="tbtn" style="left:924px;top:3px;width:110px;height:23px;"><span style="left:24px">Corel PH...</span></div><svg class="abs" style="left:929px;top:6px;overflow:visible" width="18" height="18" viewBox="0 0 18 18"><path d="M2,4 L10,1 L15,4 L17,13 L9,17 L3,13 Z" fill="#fbf4e0"/><path d="M6,8 L10,4 L14,8 L11,13 L7,12 Z" fill="#f0d070"/><path d="M4,6 L7,5 M12,12 L15,12" stroke="#d0b070" stroke-width="1.2"/></svg><div class="abs" style="left:1042px;top:3px;width:237px;height:23px;border:1px solid;border-color:#d9b050 #faf0d0 #faf0d0 #d9b050"></div><svg class="abs" style="left:1046px;top:6px;overflow:visible" width="18" height="18" viewBox="0 0 18 18"><path d="M7,1 Q10,4 7,8" fill="none" stroke="#e03020" stroke-width="1.6"/><path d="M3,9 H13 Q13,14 8,15 Q3,14 3,9 Z" fill="#d0d8f0" stroke="#2838a0" stroke-width="1.2"/><path d="M13,10 Q17,10 14,13" fill="none" stroke="#2838a0" stroke-width="1.2"/><path d="M1,16.5 Q8,19 15,16.5" fill="none" stroke="#2838a0" stroke-width="1.4"/></svg><svg class="abs" style="left:1065px;top:6px;overflow:visible" width="18" height="18" viewBox="0 0 18 18"><rect x="6" y="1" width="10" height="8" fill="#283890"/><rect x="7" y="2" width="8" height="5" fill="#4058c0"/><rect x="1" y="6" width="10" height="8" fill="#283890"/><rect x="2" y="7" width="8" height="5" fill="#5068d0"/><path d="M2,16 H11 M8,11 H16" stroke="#a0a8c0" stroke-width="2"/></svg><svg class="abs" style="left:1084px;top:6px;overflow:visible" width="20" height="18" viewBox="0 0 20 18"><circle cx="8" cy="8" r="6.5" fill="#707078"/><circle cx="7" cy="7" r="4" fill="#c0c0c8"/><circle cx="6" cy="6" r="1.6" fill="#f4f4f4"/><path d="M12,15 Q16,13 16,9 M15,17 Q19,14 18,10" fill="none" stroke="#90a8e0" stroke-width="1.2"/></svg><svg class="abs" style="left:1105px;top:6px;overflow:visible" width="18" height="18" viewBox="0 0 18 18"><rect x="0.8" y="0.8" width="16.4" height="16.4" fill="#f8e8c8" stroke="#e09830" stroke-width="1.6"/><circle cx="9" cy="9" r="5.6" fill="#fbf0d8" stroke="#e8b050" stroke-width="1.6"/><path d="M9,5.5 V9 H12" fill="none" stroke="#e0a040" stroke-width="1.3"/></svg><svg class="abs" style="left:1126px;top:6px;overflow:visible" width="18" height="18" viewBox="0 0 18 18"><path d="M3,5 Q8,0 14,3 L16,7 L10,16 L4,14 Z" fill="#303848"/><path d="M5,6 Q9,3 13,5 L9,10 Z" fill="#f0d8a0"/><path d="M10,15 L16,7" stroke="#d09020" stroke-width="2.6"/><path d="M2,10 Q5,15 10,15" fill="none" stroke="#182060" stroke-width="2"/></svg><svg class="abs" style="left:1146px;top:6px;overflow:visible" width="18" height="18" viewBox="0 0 18 18"><rect x="0" y="0" width="17" height="17" fill="#404860" stroke="#90c0e8" stroke-width="1"/><circle cx="8.5" cy="8.5" r="6.5" fill="#2070e0"/><circle cx="8.5" cy="8.5" r="4" fill="#4898f8"/><path d="M6.5,5.5 L12,8.5 L6.5,11.5 Z" fill="#fff"/></svg><svg class="abs" style="left:1166px;top:5px;overflow:visible" width="18" height="18" viewBox="0 0 18 18"><path d="M1,11 L10,2 L17,8 L8,17 Z" fill="#f8e060" stroke="#d0a020" stroke-width="1"/><path d="M4,11 L10,5 M6,13 L12,7 M8,15 L14,9" stroke="#e08020" stroke-width="1"/><circle cx="11" cy="8" r="1.4" fill="#2040c0"/></svg><svg class="abs" style="left:1185px;top:5px;overflow:visible" width="19" height="19" viewBox="0 0 19 19"><rect width="18" height="18" fill="#10107c"/><circle cx="9" cy="9" r="2" fill="#f8e020"/><path d="M5.5,5.5 Q3.5,9 5.5,12.5 M12.5,5.5 Q14.5,9 12.5,12.5 M3,3.5 Q0,9 3,14.5 M15,3.5 Q18,9 15,14.5" fill="none" stroke="#f8e020" stroke-width="1.3"/></svg><svg class="abs" style="left:1206px;top:7px;overflow:visible" width="18" height="16" viewBox="0 0 18 16"><rect x="5" y="1" width="12" height="13" fill="#78b830"/><path d="M1,7 Q6,1 12,4 Q8,3 5,7 Q8,11 12,9 Q7,13 1,7 Z" fill="#202020"/><path d="M5,7 Q8,4 11,7" fill="none" stroke="#fff" stroke-width="1"/><path d="M7,12 L16,10" stroke="#f4f4f4" stroke-width="1.2"/></svg><div class="abs" style="left:1233px;top:6px;font-size:14px;line-height:18px;color:#141440;text-shadow:1px 0 0 #fff;letter-spacing:0.2px">14:49</div></div>
</body></html>
